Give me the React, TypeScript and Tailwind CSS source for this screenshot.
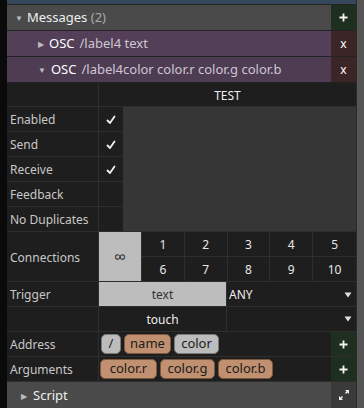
import React from "react";

const font = { fontFamily: '"Noto Sans", "Open Sans", sans-serif' };

function Check() {
  return (
    <svg width="10" height="10" viewBox="0 0 10 10">
      <path d="M1.5 5.5 L4 8 L8.5 1.5" stroke="#f0f0f0" strokeWidth="1.8" fill="none" strokeLinecap="round" strokeLinejoin="round" />
    </svg>
  );
}

function Label({ children, h = "h-[25px]" }: { children?: React.ReactNode; h?: string }) {
  return (
    <div className={`w-[92px] shrink-0 ${h} flex items-center pl-[3px] pt-[2px] bg-[#1e1e1e] border-r border-[#2e2e2e] text-[#c8c8c8]`}>
      {children}
    </div>
  );
}

function Tag({ children, tan, w }: { children: React.ReactNode; tan?: boolean; w: string }) {
  return (
    <div
      className={`h-[20px] ${w} flex items-center justify-center rounded-[5px] border ${
        tan ? "bg-[#c09070] border-[#7a5840]" : "bg-[#bcbcbc] border-[#7a7a7a]"
      } text-[#1c1c1c] text-[13px]`}
    >
      {children}
    </div>
  );
}

function Caret() {
  return (
    <svg width="8" height="6" viewBox="0 0 8 6">
      <path d="M0.5 0.5 L7.5 0.5 L4 5.5 Z" fill="#e0e0e0" />
    </svg>
  );
}

function Plus() {
  return (
    <div className="w-[25px] bg-[#1f2f1f] flex items-center justify-center">
      <svg width="9" height="9" viewBox="0 0 9 9">
        <path d="M4.5 0.5 V8.5 M0.5 4.5 H8.5" stroke="#f2f2f2" strokeWidth="1.8" />
      </svg>
    </div>
  );
}

export default function App() {
  return (
    <div className="w-[364px] h-[417px] bg-white flex flex-col text-[12px]" style={font}>
      <div className="flex h-[408px]">
        <div className="w-[7px] bg-[#0a0a0a]" />
        <div className="w-[349px] flex flex-col bg-[#1e1e1e]">
          <div className="h-[5px] bg-[#35475a] border-b border-[#222]" />
          {/* Messages header */}
          <div className="h-[26px] flex bg-[#4a4a4a] border-b border-[#222]">
            <div className="flex-1 flex items-center pl-[8px] gap-[4px] pt-[1px]">
              <span className="text-[#bbb] text-[8px]">▼</span>
              <span className="text-[#eee] text-[13px]">
                Messages <span className="text-[#aaa]">(2)</span>
              </span>
            </div>
            <Plus />
          </div>
          {/* OSC rows */}
          <div className="h-[26px] flex bg-[#533f57] border-b border-[#222]">
            <div className="flex-1 flex items-center pl-[31px] gap-[5px] pt-[1px] text-[13px]">
              <span className="text-[#bbb] text-[8px]">▶</span>
              <span className="text-white">OSC</span>
              <span className="text-[#cfc6d2]">/label4 text</span>
            </div>
            <div className="w-[25px] bg-[#3b2527] flex items-center justify-center text-white text-[12px]">x</div>
          </div>
          <div className="h-[26px] flex bg-[#4e3c52] border-b border-[#222]">
            <div className="flex-1 flex items-center pl-[31px] gap-[5px] pt-[1px] text-[13px]">
              <span className="text-[#bbb] text-[8px]">▼</span>
              <span className="text-white">OSC</span>
              <span className="text-[#cfc6d2]">/label4color color.r color.g color.b</span>
            </div>
            <div className="w-[25px] bg-[#3b2527] flex items-center justify-center text-white text-[12px]">x</div>
          </div>
          {/* TEST header */}
          <div className="h-[24px] flex border-b border-[#2e2e2e]">
            <Label h="h-[23px]" />
            <div className="flex-1 flex items-center justify-center pt-[2px] text-[#eee] text-[12px]">TEST</div>
          </div>
          {/* checkbox rows */}
          <div className="flex">
            <div className="flex flex-col">
              {[
                ["Enabled", true],
                ["Send", true],
                ["Receive", true],
                ["Feedback", false],
                ["No Duplicates", false],
              ].map(([l, c]) => (
                <div key={l as string} className="flex h-[25px] border-b border-[#2e2e2e]">
                  <Label h="h-[24px]">{l as string}</Label>
                  <div className="w-[24px] h-[24px] flex items-center justify-center pt-[1px] bg-[#1e1e1e]">{c ? <Check /> : null}</div>
                </div>
              ))}
            </div>
            <div className="flex-1 bg-[#363636] border-b border-[#2e2e2e]" />
          </div>
          {/* Connections */}
          <div className="flex h-[50px] border-b border-[#2e2e2e]">
            <Label h="h-[49px]">Connections</Label>
            <div className="w-[43px] bg-[#bdbdbd] flex items-center justify-center text-[#333] text-[17px] border-r border-[#2e2e2e]">∞</div>
            <div className="flex-1 grid grid-cols-5 grid-rows-2">
              {[1, 2, 3, 4, 5, 6, 7, 8, 9, 10].map((n, i) => (
                <div
                  key={n}
                  className={`flex items-center justify-center pt-[2px] text-[#e6e6e6] text-[12px] ${i % 5 !== 4 ? "border-r" : ""} ${i < 5 ? "border-b" : ""} border-[#2e2e2e]`}
                >
                  {n}
                </div>
              ))}
            </div>
          </div>
          {/* Trigger */}
          <div className="flex h-[25px] border-b border-[#2e2e2e]">
            <Label h="h-[24px]">Trigger</Label>
            <div className="w-[128px] bg-[#bdbdbd] flex items-center justify-center pt-[2px] text-[#333] text-[12px] border-r border-[#2e2e2e]">text</div>
            <div className="flex-1 flex items-center justify-between pl-[2px] pr-[4px] pt-[2px] text-[#eee] text-[12px]">
              <span>ANY</span>
              <Caret />
            </div>
          </div>
          <div className="flex h-[25px] border-b border-[#2e2e2e]">
            <Label h="h-[24px]" />
            <div className="w-[128px] flex items-center justify-center pt-[2px] text-[#eee] text-[12px] border-r border-[#2e2e2e]">touch</div>
            <div className="flex-1 flex items-center justify-end pr-[4px]">
              <Caret />
            </div>
          </div>
          {/* Address */}
          <div className="flex h-[25px] border-b border-[#2e2e2e]">
            <Label h="h-[24px]">Address</Label>
            <div className="flex-1 flex items-center gap-[3px] pl-[2px]">
              <Tag w="w-[20px]">/</Tag>
              <Tag tan w="w-[47px]">name</Tag>
              <Tag w="w-[45px]">color</Tag>
            </div>
            <Plus />
          </div>
          <div className="flex h-[25px] border-b border-[#2e2e2e]">
            <Label h="h-[24px]">Arguments</Label>
            <div className="flex-1 flex items-center gap-[3px] pl-[1px]">
              <Tag tan w="w-[57px]">color.r</Tag>
              <Tag tan w="w-[55px]">color.g</Tag>
              <Tag tan w="w-[55px]">color.b</Tag>
            </div>
            <Plus />
          </div>
          {/* Script */}
          <div className="flex flex-1 bg-[#4a4a4a]">
            <div className="flex-1 flex items-center pl-[14px] gap-[6px] pt-[1px]">
              <span className="text-[#bbb] text-[8px]">▶</span>
              <span className="text-[#eee] text-[13px]">Script</span>
            </div>
            <div className="w-[25px] bg-[#3a3a3a] flex items-center justify-center">
              <svg width="12" height="12" viewBox="0 0 12 12">
                <path d="M7 1 H11 V5 Z" fill="#eee" />
                <path d="M1 7 V11 H5 Z" fill="#eee" />
                <path d="M9.5 2.5 L7.5 4.5 M2.5 9.5 L4.5 7.5" stroke="#eee" strokeWidth="1.5" />
              </svg>
            </div>
          </div>
        </div>
        <div className="w-[8px] bg-[#565656] border-l border-[#2a2a2a]" />
      </div>
    </div>
  );
}
